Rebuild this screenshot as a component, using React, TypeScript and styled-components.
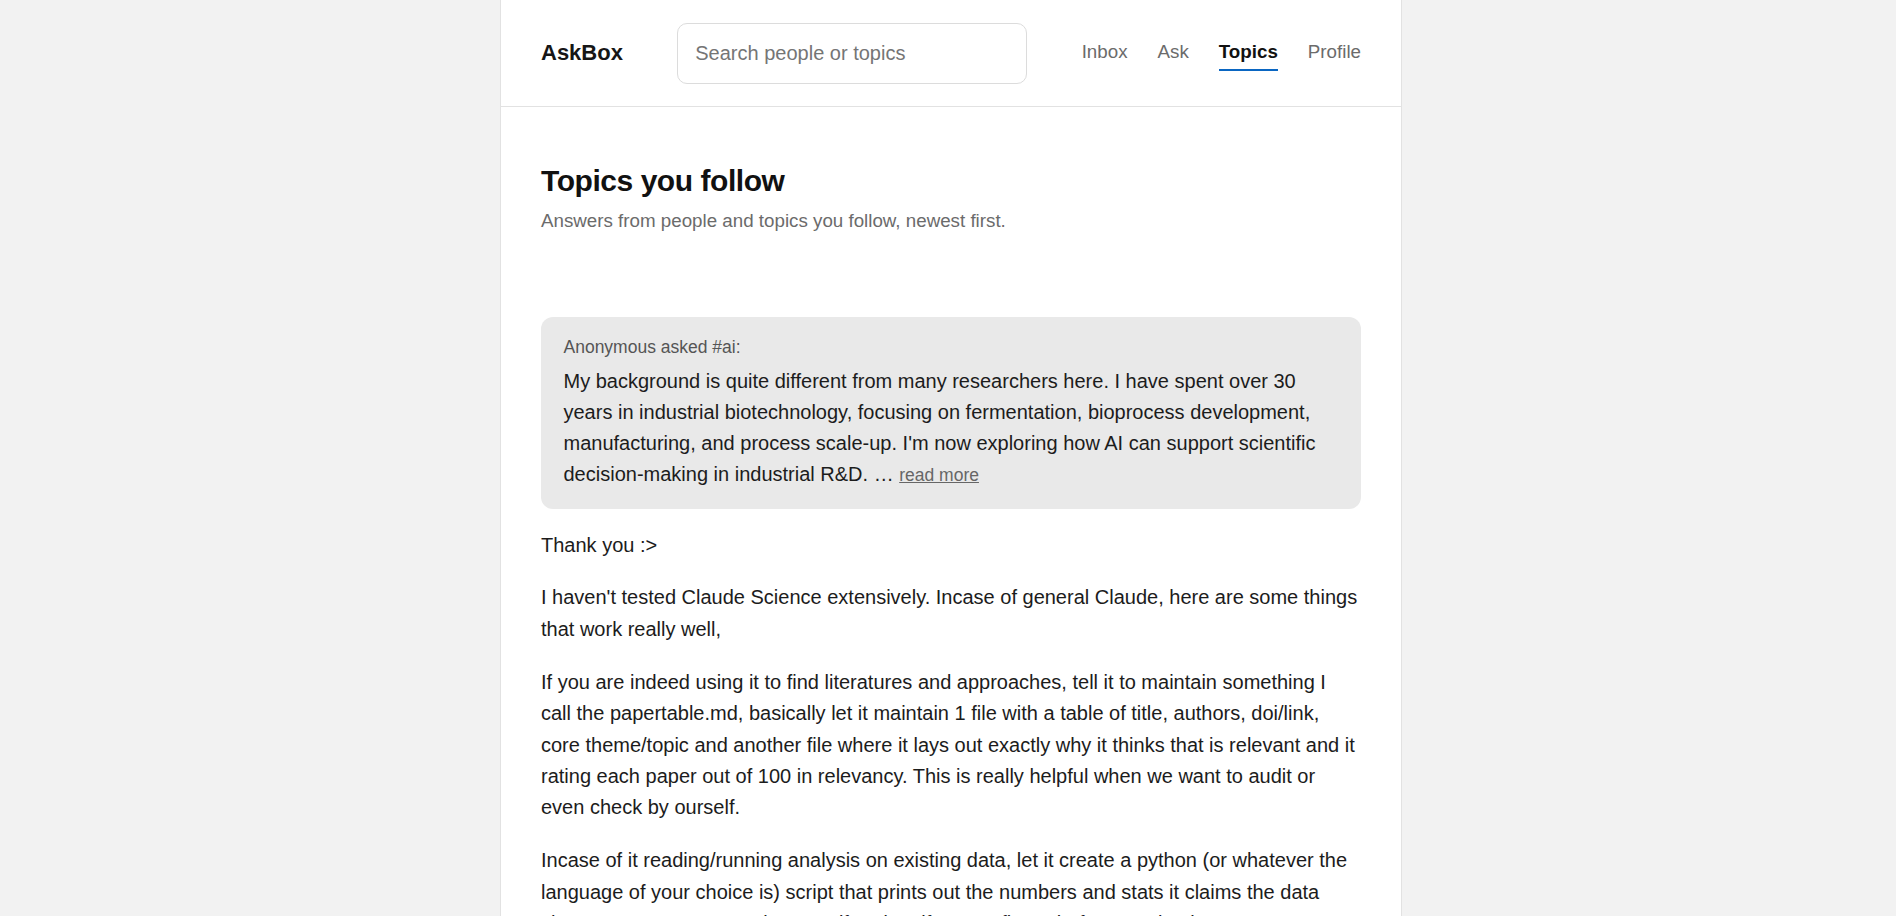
import React from "react";
import styled, { createGlobalStyle, css } from "styled-components";

const GlobalStyle = createGlobalStyle`
  html, body {
    margin: 0;
    padding: 0;
    background: #f2f2f2;
    font-family: "Liberation Sans", Arial, Helvetica, sans-serif;
    color: #1a1a1a;
  }
  * { box-sizing: border-box; }
`;

const Column = styled.div`
  width: 902px;
  min-height: 100vh;
  margin-left: calc(50% - 448px);
  background: #ffffff;
  border-left: 1px solid #e2e2e2;
  border-right: 1px solid #e2e2e2;
`;

const Header = styled.header`
  display: flex;
  align-items: center;
  justify-content: space-between;
  padding: 22.5px 40px;
  border-bottom: 1px solid #e2e2e2;
`;

const Logo = styled.div`
  font-size: 22px;
  font-weight: 700;
  color: #161616;
`;

const Search = styled.input`
  width: 350px;
  height: 61px;
  padding: 0 17px;
  border: 1px solid #dcdcdc;
  border-radius: 10px;
  font-family: inherit;
  font-size: 20px;
  color: #1a1a1a;
  background: #fff;
  outline: none;
  &::placeholder {
    color: #757575;
  }
`;

const Nav = styled.nav`
  display: flex;
  align-items: center;
  gap: 30px;
`;

const NavLink = styled.a<{ $active?: boolean }>`
  font-size: 18.75px;
  line-height: 21.5px;
  padding: 6px 0;
  border-bottom: 2px solid transparent;
  color: #6b6b6b;
  text-decoration: none;
  cursor: pointer;
  ${(p) =>
    p.$active &&
    css`
      color: #111111;
      font-weight: 700;
      border-bottom-color: #0a66c2;
    `}
`;

const Main = styled.main`
  padding: 56px 40px 60px;
`;

const Title = styled.h1`
  margin: 0;
  font-size: 30px;
  line-height: 36px;
  font-weight: 700;
  letter-spacing: -0.45px;
  color: #111111;
`;

const Subtitle = styled.p`
  margin: 8px 0 0;
  font-size: 18.75px;
  line-height: 28px;
  color: #6b6b6b;
`;

const Feed = styled.section`
  margin-top: 82px;
`;

const QuestionCard = styled.div`
  background: #e9e9e9;
  border-radius: 12px;
  padding: 17.5px 22.5px;
`;

const Meta = styled.div`
  font-size: 17.5px;
  line-height: 25px;
  color: #555555;
  margin-bottom: 6px;
`;

const QuestionText = styled.p`
  margin: 0;
  font-size: 20px;
  line-height: 31.25px;
  color: #1c1c1c;
`;

const ReadMore = styled.a`
  font-size: 17.5px;
  color: #666666;
  text-decoration: underline;
  cursor: pointer;
`;

const Answer = styled.div`
  margin-top: 20.5px;
`;

const Para = styled.p`
  margin: 0 0 21.5px;
  font-size: 20px;
  line-height: 31.4px;
  color: #1c1c1c;
`;

const navItems = ["Inbox", "Ask", "Topics", "Profile"];

const answer = [
  "Thank you :>",
  "I haven't tested Claude Science extensively. Incase of general Claude, here are some things that work really well,",
  "If you are indeed using it to find literatures and approaches, tell it to maintain something I call the papertable.md, basically let it maintain 1 file with a table of title, authors, doi/link, core theme/topic and another file where it lays out exactly why it thinks that is relevant and it rating each paper out of 100 in relevancy. This is really helpful when we want to audit or even check by ourself.",
  "Incase of it reading/running analysis on existing data, let it create a python (or whatever the language of your choice is) script that prints out the numbers and stats it claims the data shows, so you can rerun it yourself and verify every figure before trusting it.",
  "Hope this helps, and good luck with your work in industrial R&D!",
];

export default function App() {
  return (
    <>
      <GlobalStyle />
      <Column>
        <Header>
          <Logo>AskBox</Logo>
          <Search placeholder="Search people or topics" />
          <Nav>
            {navItems.map((n) => (
              <NavLink key={n} $active={n === "Topics"}>
                {n}
              </NavLink>
            ))}
          </Nav>
        </Header>
        <Main>
          <Title>Topics you follow</Title>
          <Subtitle>Answers from people and topics you follow, newest first.</Subtitle>
          <Feed>
            <QuestionCard>
              <Meta>Anonymous asked #ai:</Meta>
              <QuestionText>
                My background is quite different from many researchers here. I have spent over 30
                years in industrial biotechnology, focusing on fermentation, bioprocess development,
                manufacturing, and process scale-up. I'm now exploring how AI can support scientific
                decision-making in industrial R&amp;D. … <ReadMore>read more</ReadMore>
              </QuestionText>
            </QuestionCard>
            <Answer>
              {answer.map((t, i) => (
                <Para key={i}>{t}</Para>
              ))}
            </Answer>
          </Feed>
        </Main>
      </Column>
    </>
  );
}
